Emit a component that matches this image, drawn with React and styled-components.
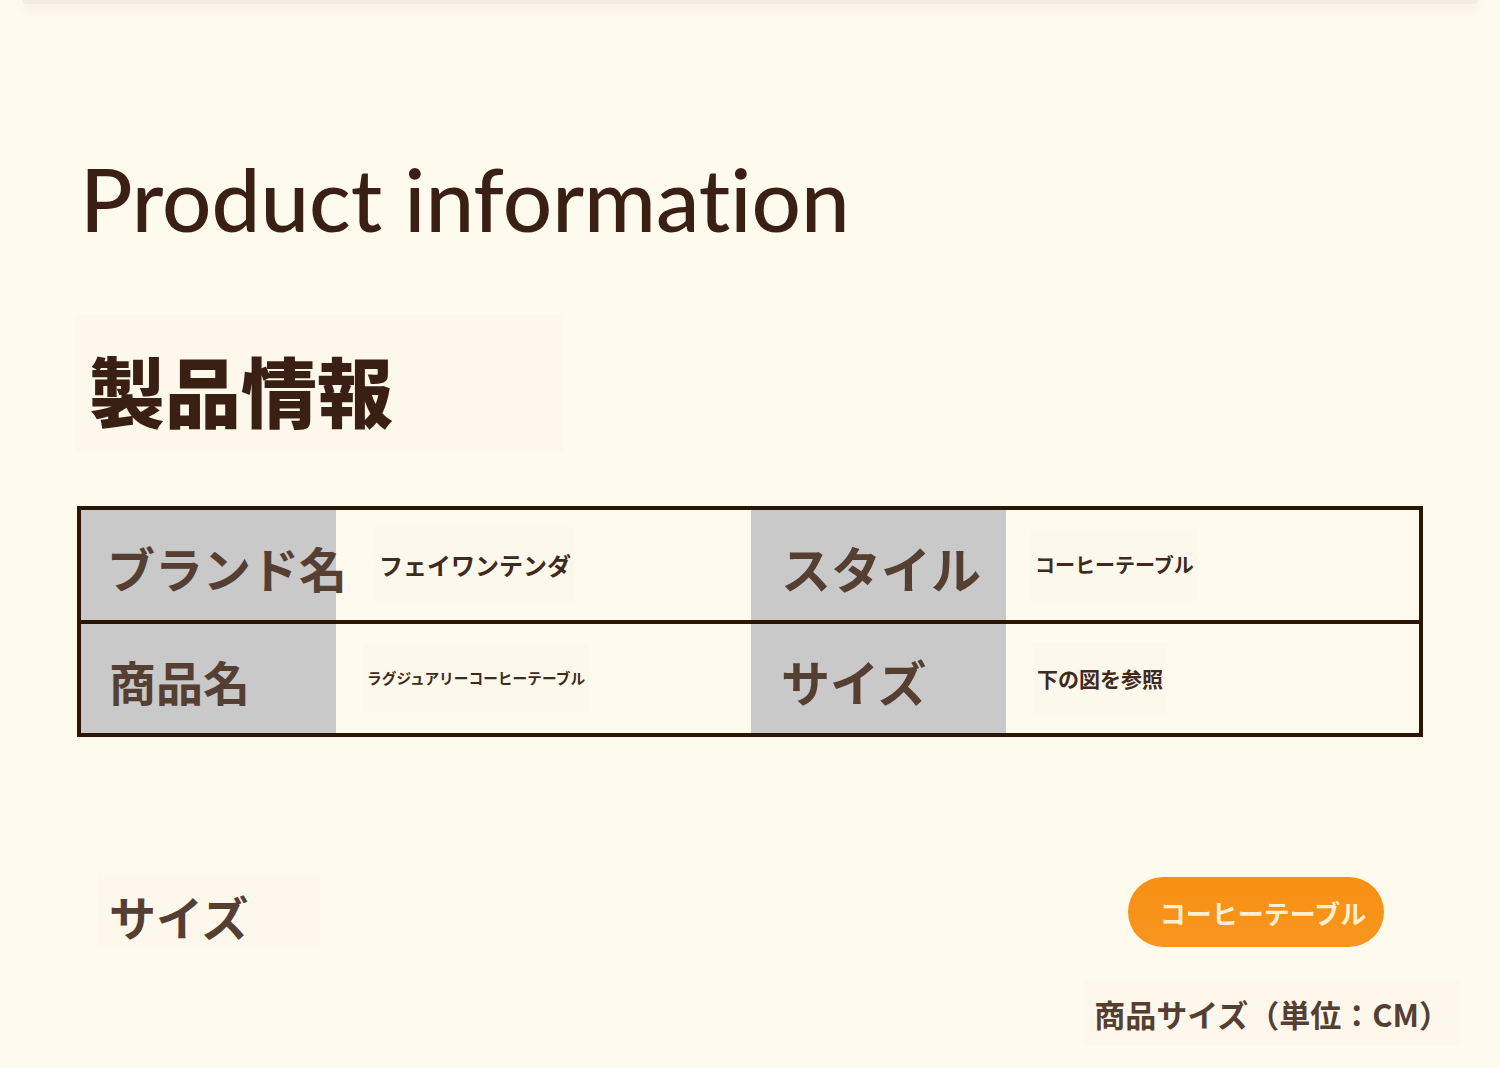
import React from "react";
import styled, { createGlobalStyle } from "styled-components";

const Global = createGlobalStyle`
  html, body { margin: 0; padding: 0; background: #fefaee; }
  body { font-family: "Noto Sans", "Noto Sans CJK JP", sans-serif; }
  * { box-sizing: border-box; }
`;

const Page = styled.div`
  width: 1500px;
  height: 1068px;
  overflow: hidden;
  background: #fefaee;
  display: flex;
  flex-direction: column;
`;

const TopCard = styled.div`
  height: 4px;
  margin: 0 22px;
  background: #f1ede3;
  border-radius: 0 0 10px 10px;
  box-shadow: 0 4px 10px rgba(120, 100, 70, 0.12);
`;

const Title = styled.h1`
  margin: 145px 0 0 80px;
  font-family: "Lato", "Noto Sans", sans-serif;
  font-weight: 500;
  font-size: 87px;
  line-height: 100px;
  color: #3a1f14;
  font-variant-ligatures: none;
  font-feature-settings: "liga" 0;
`;

const HeadingBox = styled.div`
  margin: 65px 0 0 75px;
  width: 488px;
  height: 137px;
  background: #fdf8eb;
  display: flex;
  align-items: center;
  padding-left: 14px;
`;

const Heading = styled.h2`
  margin: 0;
  font-family: "Noto Sans CJK JP", sans-serif;
  font-weight: 900;
  font-size: 76px;
  line-height: 1;
  color: #3a1f14;
  padding-top: 12px;
`;

const Table = styled.div`
  margin: 55px 0 0 77px;
  width: 1346px;
  border: 4px solid #2b1507;
  display: flex;
  flex-direction: column;
`;

const Row = styled.div`
  display: grid;
  grid-template-columns: 255px 415px 255px 1fr;
  height: ${(p) => p.$h}px;
  border-bottom: ${(p) => (p.$last ? "none" : "4px solid #2b1507")};
`;

const LabelCell = styled.div`
  background: #c9c9c9;
  display: flex;
  align-items: center;
  padding-left: ${(p) => p.$pl}px;
  position: relative;
  z-index: 1;
`;

const LabelText = styled.span`
  font-family: "Noto Sans CJK JP", sans-serif;
  font-weight: 700;
  font-size: ${(p) => p.$size}px;
  line-height: 1;
  color: #553f33;
  white-space: nowrap;
  padding-top: 4px;
`;

const ValueCell = styled.div`
  display: flex;
  align-items: center;
  padding-left: ${(p) => p.$pl}px;
`;

const ValueText = styled.span`
  font-family: "Noto Sans CJK JP", sans-serif;
  font-weight: 700;
  font-size: ${(p) => p.$size}px;
  line-height: 1;
  color: #3f2a20;
  white-space: nowrap;
  background: #fdf8ec;
  padding: 26px 4px;
`;

const Bottom = styled.div`
  margin-top: 136px;
  display: flex;
  justify-content: space-between;
  align-items: flex-start;
  padding: 0 40px 0 97px;
`;

const SubHeadingBox = styled.div`
  width: 223px;
  height: 74px;
  background: #fdf8eb;
  display: flex;
  align-items: center;
  padding-left: 12px;
`;

const SubHeading = styled.span`
  font-family: "Noto Sans CJK JP", sans-serif;
  font-weight: 700;
  font-size: 47px;
  line-height: 1;
  color: #553f33;
  padding-top: 10px;
`;

const RightCol = styled.div`
  display: flex;
  flex-direction: column;
  align-items: center;
  gap: 34px;
  padding-top: 4px;
`;

const Pill = styled.div`
  width: 256px;
  height: 70px;
  border-radius: 35px;
  background: linear-gradient(180deg, #f98f14 0%, #f7961e 100%);
  display: flex;
  align-items: center;
  justify-content: center;
  padding-left: 14px;
  font-family: "Noto Sans CJK JP", sans-serif;
  font-weight: 700;
  font-size: 26px;
  color: #fdf0d2;
  margin-right: 32px;
`;

const SizeLabel = styled.div`
  background: #fdf8eb;
  padding: 14px 10px;
  font-family: "Noto Sans CJK JP", sans-serif;
  font-weight: 700;
  font-size: 31px;
  line-height: 1.2;
  color: #553f33;
  white-space: nowrap;
`;

export default function App() {
  return (
    <Page>
      <Global />
      <TopCard />
      <Title>Product information</Title>
      <HeadingBox>
        <Heading>製品情報</Heading>
      </HeadingBox>
      <Table>
        <Row $h={114}>
          <LabelCell $pl={26}>
            <LabelText $size={48}>ブランド名</LabelText>
          </LabelCell>
          <ValueCell $pl={39}>
            <ValueText $size={24}>フェイワンテンダ</ValueText>
          </ValueCell>
          <LabelCell $pl={30}>
            <LabelText $size={50}>スタイル</LabelText>
          </LabelCell>
          <ValueCell $pl={25}>
            <ValueText $size={20}>コーヒーテーブル</ValueText>
          </ValueCell>
        </Row>
        <Row $h={109} $last>
          <LabelCell $pl={28}>
            <LabelText $size={47}>商品名</LabelText>
          </LabelCell>
          <ValueCell $pl={27}>
            <ValueText $size={14.7}>ラグジュアリーコーヒーテーブル</ValueText>
          </ValueCell>
          <LabelCell $pl={30}>
            <LabelText $size={49}>サイズ</LabelText>
          </LabelCell>
          <ValueCell $pl={27}>
            <ValueText $size={21}>下の図を参照</ValueText>
          </ValueCell>
        </Row>
      </Table>
      <Bottom>
        <SubHeadingBox>
          <SubHeading>サイズ</SubHeading>
        </SubHeadingBox>
        <RightCol>
          <Pill>コーヒーテーブル</Pill>
          <SizeLabel>商品サイズ（単位：CM）</SizeLabel>
        </RightCol>
      </Bottom>
    </Page>
  );
}
